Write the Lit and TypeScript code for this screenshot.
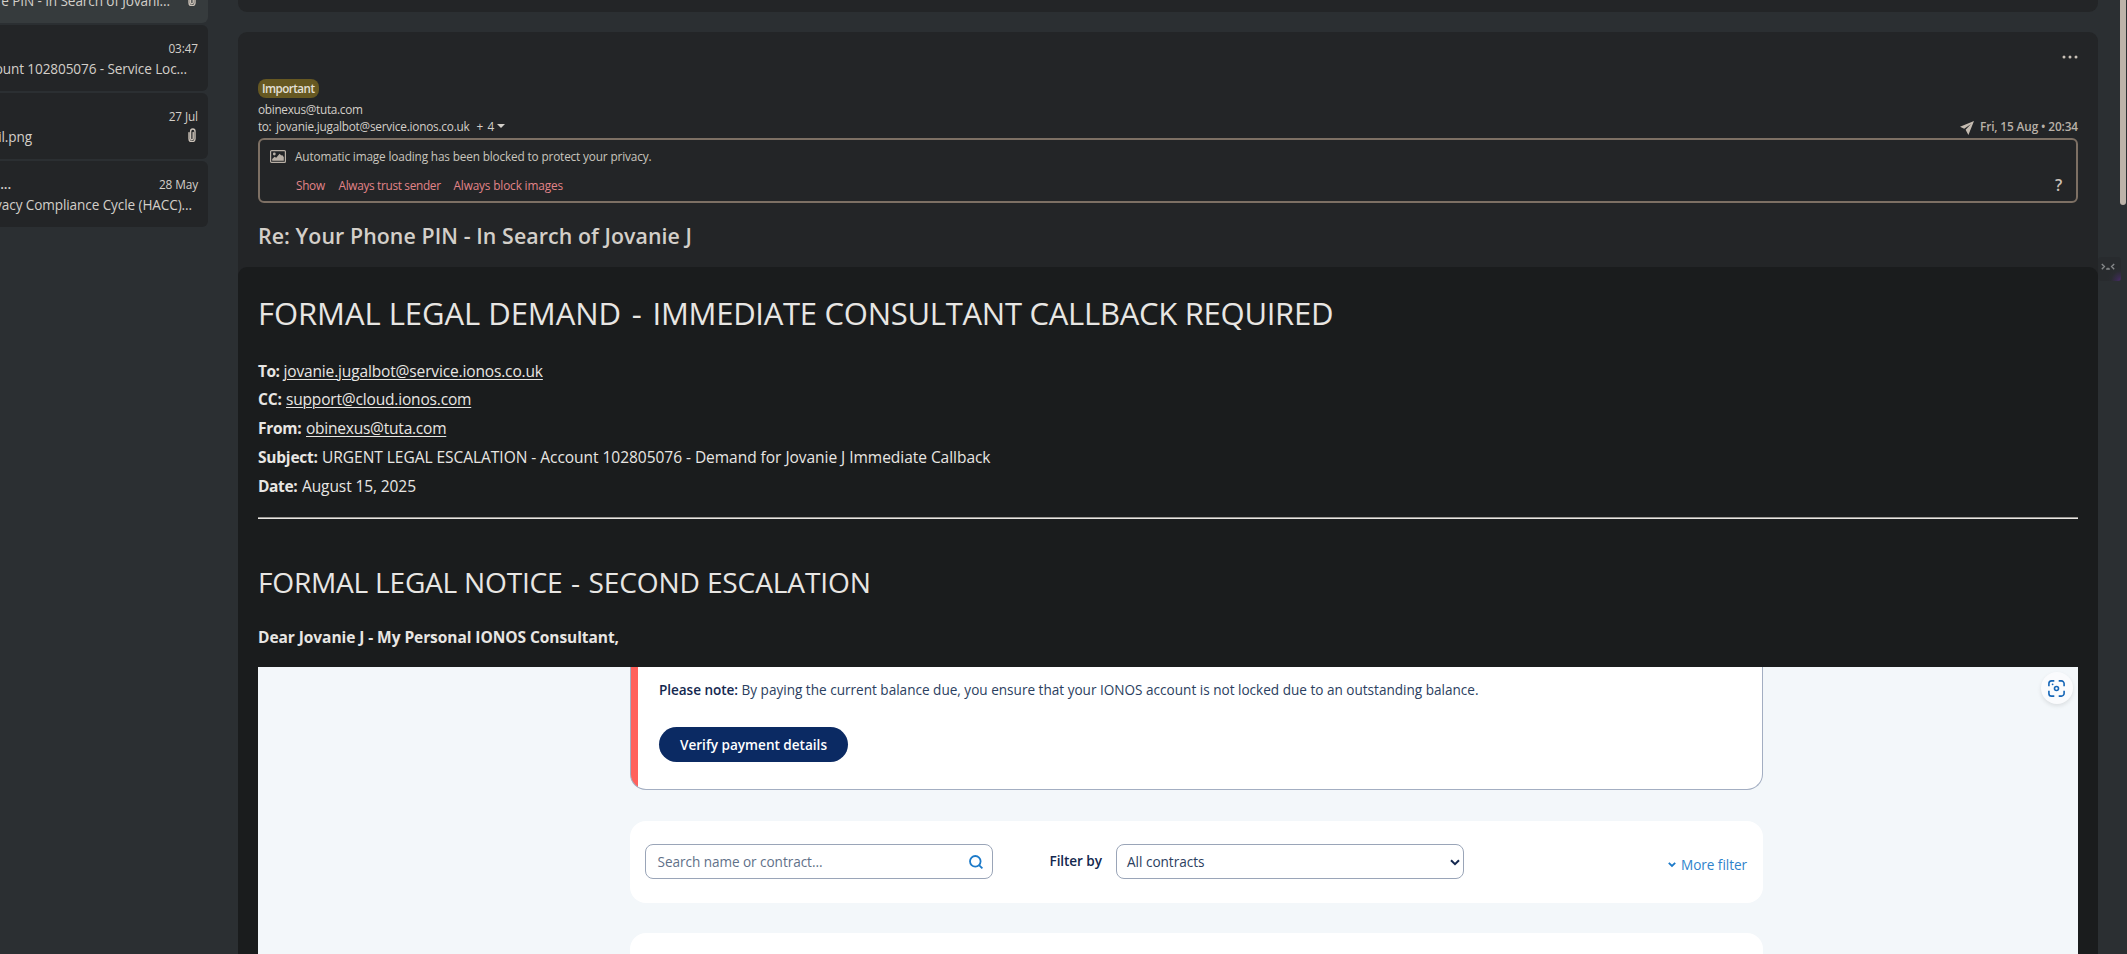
import { LitElement, html, css, svg, nothing } from "lit";
import { customElement } from "lit/decorators.js";
import { styleMap } from "lit/directives/style-map.js";

interface MailItem {
  date: string;
  sender?: string;
  subject: string;
  subjectEnd: number;
  clip?: boolean;
  selected?: boolean;
}

const MAILS: MailItem[] = [
  { date: "", subject: "e PIN - In Search of Jovani...", subjectEnd: 170, clip: true, selected: true },
  { date: "03:47", subject: "ount 102805076 - Service Loc...", subjectEnd: 187 },
  { date: "27 Jul", subject: "il.png", subjectEnd: 32, clip: true },
  { date: "28 May", sender: "...", subject: "vacy Compliance Cycle (HACC)...", subjectEnd: 192 },
];

const clipIcon = svg`<path d="M1 4.6v6.2a3 3 0 0 0 6 0V3.2a2.2 2.2 0 0 0-4.4 0v7.2a1.3 1.3 0 0 0 2.6 0V4.4" fill="none" stroke="currentColor" stroke-width="1.4" stroke-linecap="round"/>`;

@customElement("mail-list")
class MailList extends LitElement {
  static styles = css`
    :host { display: flex; flex-direction: column; gap: 2px; width: 208px; margin-top: -43px; overflow: hidden; color: #d3cfc9; }
    .card { height: 66px; box-sizing: border-box; padding: 15px 10px 0 0; background: #232527; border-radius: 0 6px 6px 0; flex: none; overflow: hidden; }
    .card.selected { background: #363b3d; }
    .top { display: flex; justify-content: space-between; height: 17px; font-size: 11.8px; line-height: 17px; letter-spacing: -0.1px; }
    .sender { width: 11px; display: flex; justify-content: flex-end; font-size: 13.5px; font-weight: 600; }
    .bottom { display: flex; justify-content: space-between; height: 20px; margin-top: 2px; }
    .subject { display: flex; justify-content: flex-end; flex: none; white-space: nowrap; font-size: 13.58px; line-height: 20px; letter-spacing: -0.1px; }
    svg { width: 8px; height: 14px; margin: 1px 2px 0 0; color: #c9c0b6; }
  `;
  render() {
    return MAILS.map((m) => html`
      <div class="card ${m.selected ? "selected" : ""}">
        <div class="top"><span class="sender">${m.sender ?? ""}</span><span>${m.date}</span></div>
        <div class="bottom">
          <span class="subject" style=${styleMap({ width: `${m.subjectEnd}px` })}>${m.subject}</span>
          ${m.clip ? html`<svg viewBox="0 0 8 14">${clipIcon}</svg>` : nothing}
        </div>
      </div>`);
  }
}

@customElement("mail-header")
class MailHeader extends LitElement {
  static styles = css`
    :host { display: block; padding: 0 20px 16px; color: #d3cfc9; font-size: 11.8px; line-height: 17px; }
    svg { display: block; flex: none; }
    .actions { display: flex; justify-content: flex-end; height: 47px; }
    .actions svg { margin-top: 23px; }
    .badge { display: block; width: 61px; height: 19px; box-sizing: border-box; padding-left: 4px; border-radius: 8px; background: #665822; color: #e4e0d8; font-weight: 600; line-height: 19px; font-size: 11.6px; letter-spacing: -0.52px; }
    .from { margin-top: 3px; letter-spacing: -0.3px; }
    .to { display: flex; align-items: center; height: 17px; }
    .to .label { letter-spacing: -0.4px; width: 18px; }
    .to .addr { letter-spacing: -0.22px; }
    .to .more { margin-left: 7px; letter-spacing: 0.6px; }
    .to .arrow { margin: -1px 0 0 2px; }
    .date { margin-left: auto; display: flex; align-items: center; gap: 6px; font-weight: 600; color: #b9b1a8; letter-spacing: -0.11px; }
    .date svg { margin-top: 2px; }
    .notice { display: flex; height: 65px; box-sizing: border-box; margin-top: 3px; border: 2px solid #7d7064; border-radius: 6px; padding: 8px 12px 0 10px; color: #c9c5be; }
    .notice .pic { margin: 2px 9px 0 0; }
    .msg { letter-spacing: -0.152px; }
    .links { display: flex; margin: 12px 0 0 1px; color: #e28489; }
    .links span { white-space: nowrap; }
    .l1 { width: 42.5px; letter-spacing: -0.3px; }
    .l2 { width: 115px; letter-spacing: -0.31px; }
    .l3 { letter-spacing: -0.14px; }
    .help { margin: 29px 0 0 auto; font-size: 16px; font-weight: 600; line-height: 17px; color: #c9c0b6; width: 9px; }
    .subject { margin: 18px 0 0; font-size: 21.34px; line-height: 30px; font-weight: 600; letter-spacing: 0.08px; color: #d3cfc9; }
  `;
  render() {
    return html`
      <div class="actions">
        <svg width="16" height="4" viewBox="0 0 16 4" fill="#c9c0b6"><circle cx="2" cy="2" r="1.5"/><circle cx="8" cy="2" r="1.5"/><circle cx="14" cy="2" r="1.5"/></svg>
      </div>
      <span class="badge">Important</span>
      <div class="from">obinexus@tuta.com</div>
      <div class="to">
        <span class="label">to:</span><span class="addr">jovanie.jugalbot@service.ionos.co.uk</span><span class="more">+ 4</span>
        <svg class="arrow" width="8" height="4" viewBox="0 0 8 4"><path d="M0 0h8L4 4z" fill="#d3cfc9"/></svg>
        <span class="date">
          <svg width="14" height="14" viewBox="0 0 14 14"><path d="M14 0 0 5.8l4.2 2L11 3 5.6 8.7 8.4 14z" fill="#c4bbb0"/></svg>
          <span>Fri, 15 Aug • 20:34</span>
        </span>
      </div>
      <div class="notice">
        <svg class="pic" width="16" height="13" viewBox="0 0 16 13"><rect x=".6" y=".6" width="14.8" height="11.8" rx="1" fill="none" stroke="#b8afa5" stroke-width="1.2"/><circle cx="4.3" cy="4" r="1.4" fill="#b8afa5"/><path d="M2.2 10.8V9l2.4-2.2 1.6 1 3.4-4 1.7 1.7 .8-.4 1.7 2v3.7z" fill="#b8afa5"/></svg>
        <div>
          <div class="msg">Automatic image loading has been blocked to protect your privacy.</div>
          <div class="links"><span class="l1">Show</span><span class="l2">Always trust sender</span><span class="l3">Always block images</span></div>
        </div>
        <span class="help">?</span>
      </div>
      <h1 class="subject">Re: Your Phone PIN - In Search of Jovanie J</h1>`;
  }
}

@customElement("billing-shot")
class BillingShot extends LitElement {
  static styles = css`
    :host { display: block; position: relative; height: 287px; overflow: hidden; background: #f3f7fa; color: #2b4060; font-size: 13.58px; line-height: 20px; }
    .col { width: 1133px; margin-left: 372px; }
    .note { display: flex; height: 122.7px; box-sizing: border-box; border: 1px solid #a3aec2; border-top: 0; border-radius: 0 0 16px 16px; background: linear-gradient(90deg, #ff615c 7px, #fff 7px); padding: 13px 0 0 28px; flex-direction: column; }
    .text { white-space: nowrap; letter-spacing: -0.006px; }
    b { display: inline-block; width: 82.5px; font-weight: 600; letter-spacing: -0.056px; color: #14284f; }
    .btn { width: 189px; height: 35px; margin-top: 27px; border-radius: 18px; background: #0b2a63; color: #fff; font-weight: 600; line-height: 35px; text-align: center; letter-spacing: -0.011px; }
    .filter { display: flex; height: 81.5px; box-sizing: border-box; margin: 31.3px 0 30.5px; padding: 23px 16px 0 15px; border-radius: 16px; background: #fff; }
    .field { display: flex; align-items: center; width: 348px; height: 35px; box-sizing: border-box; border: 1.5px solid #9aa5b8; border-radius: 8px; background: #fff; padding: 0 9px 0 11.5px; justify-content: space-between; }
    .search { color: #5f7189; letter-spacing: -0.054px; }
    .by { margin: 7px 0 0 56.5px; width: 66.5px; font-weight: 600; color: #14284f; letter-spacing: -0.076px; }
    .select { padding: 1px 3px 0 10px; letter-spacing: -0.018px; }
    .more { display: flex; align-items: center; gap: 5px; height: 20px; margin: 11px 0 0 auto; color: #2f83cb; letter-spacing: -0.052px; }
    .next { height: 60px; border-radius: 16px; background: #fff; }
    .lens { position: absolute; right: 5px; top: 5px; width: 32px; height: 32px; border-radius: 50%; background: #fafbfd; box-shadow: 0 2px 4px rgba(0, 0, 0, 0.1); display: grid; place-items: center; }
    .lens svg { margin-right: 1px; }
  `;
  render() {
    return html`
      <div class="col">
        <div class="note">
          <div class="text"><b>Please note:</b>By paying the current balance due, you ensure that your IONOS account is not locked due to an outstanding balance.</div>
          <div class="btn">Verify payment details</div>
        </div>
        <div class="filter">
          <div class="field"><span class="search">Search name or contract...</span>
            <svg width="14" height="14" viewBox="0 0 14 14" fill="none" stroke="#1c7ac9" stroke-width="1.8"><circle cx="6.3" cy="6.3" r="5.3"/><path d="m9.8 9.8 3.6 3.6"/></svg></div>
          <span class="by">Filter by</span>
          <div class="field select"><span>All contracts</span>
            <svg width="10" height="7" viewBox="0 0 10 7" fill="none" stroke="#14284f" stroke-width="2"><path d="m1 1.2 4 4 4-4"/></svg></div>
          <div class="more"><svg width="8" height="6" viewBox="0 0 8 6" fill="none" stroke="#1c7ac9" stroke-width="1.8"><path d="m.8 .8 3.2 3.2 3.2-3.2"/></svg><span>More filter</span></div>
        </div>
        <div class="next"></div>
      </div>
      <div class="lens">
        <svg width="17" height="17" viewBox="0 0 17 17" fill="none" stroke="#1566b7" stroke-width="1.6"><path d="M.9 6.3V3.6A2.7 2.7 0 0 1 3.6.9h2.7M10.7.9h2.7a2.7 2.7 0 0 1 2.7 2.7v2.7M16.1 10.7v2.7a2.7 2.7 0 0 1-2.7 2.7h-2.7M6.3 16.1H3.6a2.7 2.7 0 0 1-2.7-2.7v-2.7"/><circle cx="8.5" cy="8.5" r="2"/><circle cx="4.6" cy="4.3" r=".9" fill="#1566b7" stroke="none"/></svg>
      </div>`;
  }
}

@customElement("mail-body")
class MailBody extends LitElement {
  static styles = css`
    :host { display: block; height: 687px; box-sizing: border-box; padding: 24px 20px 0; border-radius: 9px 9px 0 0; background: #1a1c1d; color: #e8e6e3; font-size: 15.52px; line-height: 28.8px; }
    h1, h2 { margin: 0; font-weight: 400; white-space: nowrap; }
    h1 { font-size: 31.04px; line-height: 44px; letter-spacing: -0.06px; }
    h1 .dash { margin: 0 2.8px; }
    h1 .tail { letter-spacing: -0.29px; }
    h2 { font-size: 28.13px; line-height: 40px; letter-spacing: -0.25px; margin-top: 42.6px; }
    h2 .dash { margin: 0 1.6px; }
    h2 .tail { letter-spacing: -0.16px; }
    .meta { margin-top: 21.6px; height: 144px; }
    .row { display: flex; height: 28.8px; white-space: nowrap; }
    .link { text-decoration: underline; text-decoration-thickness: 1px; text-underline-offset: 2px; }
    .row b { flex: none; }
    .to b { width: 25.5px; letter-spacing: -0.5px; } .to span { letter-spacing: -0.155px; }
    .cc b { width: 28px; letter-spacing: -0.1px; } .cc span { letter-spacing: -0.185px; }
    .fr b { width: 48px; letter-spacing: -0.3px; } .fr span { letter-spacing: -0.238px; }
    .su b { width: 64px; letter-spacing: -0.23px; } .su span { letter-spacing: -0.041px; }
    .da b { width: 44px; letter-spacing: -0.4px; } .da span { letter-spacing: -0.107px; }
    .rule { height: 1px; margin-top: 16.4px; border-top: 1px solid #9b9894; background: #e8e6e3; }
    .dear { margin-top: 21.6px; height: 28.8px; margin-bottom: 15.2px; font-weight: 700; letter-spacing: -0.073px; }
  `;
  render() {
    return html`
      <h1>FORMAL LEGAL DEMAND <span class="dash">-</span> <span class="tail">IMMEDIATE CONSULTANT CALLBACK REQUIRED</span></h1>
      <div class="meta">
        <div class="row to"><b>To:</b><span class="link">jovanie.jugalbot@service.ionos.co.uk</span></div>
        <div class="row cc"><b>CC:</b><span class="link">support@cloud.ionos.com</span></div>
        <div class="row fr"><b>From:</b><span class="link">obinexus@tuta.com</span></div>
        <div class="row su"><b>Subject:</b><span>URGENT LEGAL ESCALATION - Account 102805076 - Demand for Jovanie J Immediate Callback</span></div>
        <div class="row da"><b>Date:</b><span>August 15, 2025</span></div>
      </div>
      <div class="rule"></div>
      <h2>FORMAL LEGAL NOTICE <span class="dash">-</span> <span class="tail">SECOND ESCALATION</span></h2>
      <div class="dear">Dear Jovanie J - My Personal IONOS Consultant,</div>
      <billing-shot></billing-shot>`;
  }
}

@customElement("app-root")
class AppRoot extends LitElement {
  static styles = css`
    :host { display: flex; position: relative; width: 100%; height: 954px; overflow: hidden; background: #2b2f32; font-family: "Open Sans", "Noto Sans", sans-serif; }
    .main { width: 1860px; margin-left: 30px; flex: none; }
    .prev { height: 12px; border-radius: 0 0 9px 9px; background: #232527; }
    .mail { height: 922px; margin-top: 20px; border-radius: 9px 9px 0 0; background: #232527; }
    .thumb { width: 6px; height: 205px; margin-left: 22px; border-radius: 0 0 3px 3px; background: #bdb3a9; flex: none; }
    .face { position: absolute; right: 6px; top: 257px; width: 23px; height: 24px; border-radius: 3px; background: radial-gradient(circle at 100% 100%, #4b2a6b 0, #3a2b50 4px, #2a2c31 10px, #282b2e 14px); display: grid; place-items: center; }
    .face svg { margin: 0 3px 4px 0; }
  `;
  render() {
    return html`
      <mail-list></mail-list>
      <div class="main">
        <div class="prev"></div>
        <div class="mail"><mail-header></mail-header><mail-body></mail-body></div>
      </div>
      <div class="thumb"></div>
      <div class="face"><svg width="14" height="8" viewBox="0 0 14 8" fill="none" stroke="#85888a" stroke-width="1.4"><path d="m.8 1 2.6 2.6L.8 6.2M13.2 1l-2.6 2.6 2.6 2.6M5.4 5.5q.8 1.2 1.6 0 .8 1.2 1.6 0"/></svg></div>`;
  }
}
